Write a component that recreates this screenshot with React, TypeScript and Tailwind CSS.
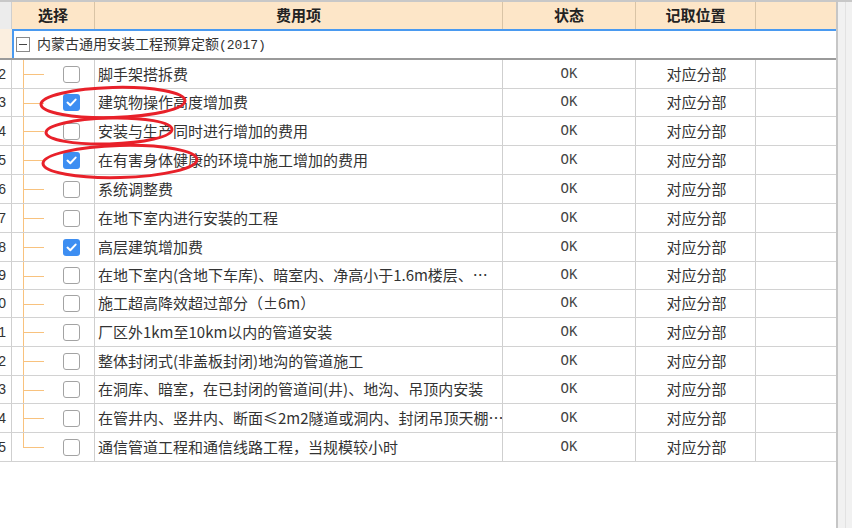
import React from "react";

type Row = { t: string; c?: boolean; h: 28 | 29 };

const rows: Row[] = [
  { t: "脚手架搭拆费", h: 29 },
  { t: "建筑物操作高度增加费", c: true, h: 28 },
  { t: "安装与生产同时进行增加的费用", h: 29 },
  { t: "在有害身体健康的环境中施工增加的费用", c: true, h: 29 },
  { t: "系统调整费", h: 29 },
  { t: "在地下室内进行安装的工程", h: 29 },
  { t: "高层建筑增加费", c: true, h: 29 },
  { t: "在地下室内(含地下车库)、暗室内、净高小于1.6m楼层、⋯", h: 28 },
  { t: "施工超高降效超过部分（±6m）", h: 28 },
  { t: "厂区外1km至10km以内的管道安装", h: 29 },
  { t: "整体封闭式(非盖板封闭)地沟的管道施工", h: 29 },
  { t: "在洞库、暗室，在已封闭的管道间(井)、地沟、吊顶内安装", h: 28 },
  { t: "在管井内、竖井内、断面≤2m2隧道或洞内、封闭吊顶天棚⋯", h: 29 },
  { t: "通信管道工程和通信线路工程，当规模较小时", h: 29 },
];

const cols = "grid grid-cols-[12px_83px_408px_133px_120px_82px]";
const cjk = { fontFamily: '"Noto Sans CJK SC", "Noto Sans", sans-serif' };

function Check({ on }: { on?: boolean }) {
  if (on)
    return (
      <div className="w-[17px] h-[17px] rounded-[3px] bg-[#3d8ef2] flex items-center justify-center">
        <svg width="11" height="9" viewBox="0 0 11 9">
          <path d="M1.5 4.6 L4.3 7.2 L9.6 1.6" fill="none" stroke="#fff" strokeWidth="2" strokeLinecap="round" strokeLinejoin="round" />
        </svg>
      </div>
    );
  return <div className="w-[17px] h-[17px] rounded-[3px] border border-[#a3a3a3] bg-white" />;
}

export default function App() {
  return (
    <div className="relative w-[852px] h-[528px] bg-white flex overflow-hidden" style={cjk}>
      <div className="w-[838px] border-r-2 border-[#c6c6c6] flex flex-col">
        {/* header */}
        <div className={`${cols} h-[29px] border-t-2 border-[#c8c8c8] bg-[#fde6c8] text-[15px] font-bold text-[#222]`}>
          <div className="bg-[#ececec] border-r border-[#cfcfcf]" />
          <div className="border-r border-[#d9c4a6] flex items-center justify-center">选择</div>
          <div className="border-r border-[#d9c4a6] flex items-center justify-center">费用项</div>
          <div className="border-r border-[#d9c4a6] flex items-center justify-center">状态</div>
          <div className="border-r border-[#d9c4a6] flex items-center justify-center">记取位置</div>
          <div />
        </div>
        {/* group row */}
        <div className="flex h-[31px] border-b-2 border-[#9a9a9a]">
          <div className="w-[12px] bg-[#fbefe0] border-t-2 border-[#fbefe0]" />
          <div className="flex-1 border-t-2 border-l-2 border-[#4a9af0] flex items-center">
            <div className="ml-[2px] w-[14px] h-[15px] border border-[#8a8a8a] flex items-center justify-center">
              <div className="w-[8px] h-[1px] bg-[#444]" />
            </div>
            <span className="ml-[7px] text-[14px] text-[#333] whitespace-nowrap">
              内蒙古通用安装工程预算定额<span style={{ fontFamily: '"Liberation Mono", monospace' }} className="text-[13px]">(2017)</span>
            </span>
          </div>
        </div>
        {/* data rows */}
        {rows.map((r, i) => {
          const last = i === rows.length - 1;
          return (
            <div
              key={i}
              className={`${cols} ${r.h === 29 ? "h-[29px]" : "h-[28px]"} border-b border-[#d2d2d2] text-[15px] text-[#333]`}
            >
              <div className="border-r border-[#cfcfcf] overflow-hidden flex items-center justify-end pr-[5px] text-[14px] text-[#333]" style={{ fontFamily: '"Liberation Sans", sans-serif' }}>
                <span className="whitespace-nowrap">{i + 2}</span>
              </div>
              <div className="relative border-r border-[#cfcfcf] flex items-center">
                <div className={`absolute left-[11px] top-0 w-[1px] bg-[#f8c27e] ${last ? "h-1/2" : "h-full"}`} />
                <div className="absolute left-[11px] top-1/2 w-[21px] h-[1px] bg-[#f8c27e]" />
                <div className="ml-[51px]">
                  <Check on={r.c} />
                </div>
              </div>
              <div className="border-r border-[#cfcfcf] flex items-center pl-[3px] whitespace-nowrap overflow-hidden">
                {r.t}
              </div>
              <div className="border-r border-[#cfcfcf] flex items-center justify-center text-[14px] text-[#444]" style={{ fontFamily: '"Liberation Mono", monospace' }}>
                OK
              </div>
              <div className="border-r border-[#cfcfcf] flex items-center justify-center pl-[2px]">对应分部</div>
              <div />
            </div>
          );
        })}
        <div className="flex-1" />
      </div>
      {/* scrollbar */}
      <div className="flex-1 bg-[#f1f1f1] border-t-2 border-[#c8c8c8] flex justify-end">
        <div className="w-[7px] border-l border-[#e2e2e2]" />
      </div>

      {/* red annotation ellipses */}
      <svg className="absolute left-0 top-0 pointer-events-none" width="852" height="528">
        <ellipse cx="113" cy="102.5" rx="72" ry="15" fill="none" stroke="#e8212a" strokeWidth="3" transform="rotate(-1.5 113 102.5)" />
        <ellipse cx="109" cy="131" rx="63" ry="13" fill="none" stroke="#e8212a" strokeWidth="3" transform="rotate(-1.5 109 131)" />
        <ellipse cx="120" cy="161.5" rx="77" ry="16" fill="none" stroke="#e8212a" strokeWidth="3" transform="rotate(-1.5 120 161.5)" />
      </svg>
    </div>
  );
}
